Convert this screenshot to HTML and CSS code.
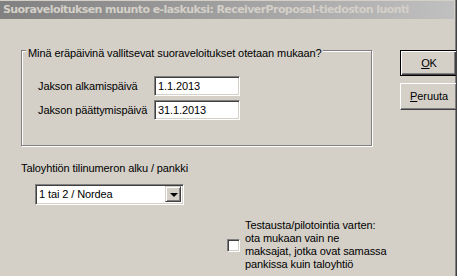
FILE: index.html
```html
<!DOCTYPE html>
<html lang="fi">
<head>
<meta charset="utf-8">
<title>Suoraveloituksen muunto e-laskuksi</title>
<link rel="stylesheet" href="styles.css">
</head>
<body>
<div class="window">
  <div class="titlebar">Suoraveloituksen muunto e-laskuksi: ReceiverProposal-tiedoston luonti</div>
  <div class="client">
    <div class="left">
      <div class="group">
        <span class="legend">Minä eräpäivinä vallitsevat suoraveloitukset otetaan mukaan?</span>
        <div class="row first">
          <span class="lbl">Jakson alkamispäivä</span>
          <div class="field">1.1.2013</div>
        </div>
        <div class="row">
          <span class="lbl">Jakson päättymispäivä</span>
          <div class="field">31.1.2013</div>
        </div>
      </div>
      <div class="bank-label">Taloyhtiön tilinumeron alku / pankki</div>
      <div class="combo">
        <span class="combo-text">1 tai 2 / Nordea</span>
        <span class="combo-btn"><span class="arrow"></span></span>
      </div>
      <div class="check-row">
        <span class="checkbox"></span>
        <span class="check-text">Testausta/pilotointia varten:<br>ota mukaan vain ne<br>maksajat, jotka ovat samassa<br>pankissa kuin taloyhtiö</span>
      </div>
    </div>
    <div class="buttons">
      <div class="btn default"><span><u>O</u>K</span></div>
      <div class="btn cancel"><span><u>P</u>eruuta</span></div>
    </div>
  </div>
</div>
</body>
</html>
```
FILE: styles.css
```css
* { box-sizing: border-box; }
html, body { margin: 0; padding: 0; }
body {
  background: #d4d0c8;
  font-family: "Liberation Sans", Arial, sans-serif;
  font-size: 11px;
  line-height: 13px;
  letter-spacing: -0.1px;
  color: #000;
}
.window {
  width: 457px;
  height: 276px;
  padding-top: 1px;
  border-right: 1px solid #404040;
  box-shadow: inset -1px 0 0 #808080;
  overflow: hidden;
}
.titlebar {
  height: 18px;
  margin-right: 2px;
  padding-left: 3px;
  background: linear-gradient(to right, #808080, #c0c0c0);
  color: #d4d0c8;
  font-family: "DejaVu Sans", Verdana, sans-serif;
  font-weight: bold;
  font-size: 11px;
  letter-spacing: -0.58px;
  line-height: 18px;
  white-space: nowrap;
  overflow: hidden;
}
.client {
  display: flex;
  padding: 31px 0 0 21px;
}
.left {
  display: flex;
  flex-direction: column;
  align-items: flex-start;
}
.group {
  width: 351px;
  border: 1px solid #808080;
  box-shadow: inset 1px 1px 0 #fff, 1px 1px 0 #fff;
  padding: 0 0 25px 0;
  display: flex;
  flex-direction: column;
}
.legend {
  align-self: flex-start;
  margin: -4px 0 0 4px;
  padding: 0 1px 0 2px;
  background: #d4d0c8;
  white-space: nowrap;
}
.row {
  display: flex;
  align-items: center;
  padding-left: 16px;
  margin-top: 4px;
}
.row.first { margin-top: 16px; }
.lbl { width: 116px; white-space: nowrap; }
.field {
  width: 86px;
  height: 20px;
  background: #fff;
  border: 1px solid;
  border-color: #808080 #fff #fff #808080;
  box-shadow: inset 1px 1px 0 #404040, inset -1px -1px 0 #d4d0c8;
  padding: 3px 0 0 3px;
  line-height: 13px;
}
.bank-label {
  margin-top: 16px;
  white-space: nowrap;
}
.combo {
  margin: 9px 0 0 14px;
  width: 149px;
  height: 21px;
  background: #fff;
  border: 1px solid;
  border-color: #808080 #fff #fff #808080;
  box-shadow: inset 1px 1px 0 #404040, inset -1px -1px 0 #d4d0c8;
  padding: 1px 2px 2px 2px;
  display: flex;
  align-items: stretch;
  justify-content: space-between;
}
.combo-text {
  padding-left: 1px;
  line-height: 17px;
}
.combo-btn {
  width: 16px;
  background: #d4d0c8;
  border: 1px solid;
  border-color: #d4d0c8 #404040 #404040 #d4d0c8;
  box-shadow: inset 1px 1px 0 #fff, inset -1px -1px 0 #808080;
  display: flex;
  align-items: center;
  justify-content: center;
}
.arrow {
  width: 0;
  height: 0;
  border-left: 4px solid transparent;
  border-right: 4px solid transparent;
  border-top: 4px solid #000;
  margin-top: 1px;
  margin-left: 1px;
}
.check-row {
  display: flex;
  align-items: center;
  margin: 14px 0 0 206px;
}
.checkbox {
  width: 13px;
  height: 13px;
  flex: none;
  background: #fff;
  border: 1px solid;
  border-color: #808080 #fff #fff #808080;
  box-shadow: inset 1px 1px 0 #404040, inset -1px -1px 0 #d4d0c8;
  margin-right: 5px;
}
.check-text { white-space: nowrap; }
.buttons {
  margin-left: 14px;
  display: flex;
  flex-direction: column;
}
.btn {
  width: 57px;
  height: 26px;
  display: flex;
  align-items: center;
  justify-content: center;
  background: #d4d0c8;
}
.btn.default {
  border: 1px solid #000;
  box-shadow: inset 1px 1px 0 #fff, inset -1px -1px 0 #404040, inset -2px -2px 0 #808080;
}
.btn.cancel {
  margin-top: 7px;
  height: 27px;
  border: 1px solid;
  border-color: #fff #404040 #404040 #fff;
  box-shadow: inset -1px -1px 0 #808080;
}
.btn u { text-decoration: underline; text-underline-offset: 1px; }
```
